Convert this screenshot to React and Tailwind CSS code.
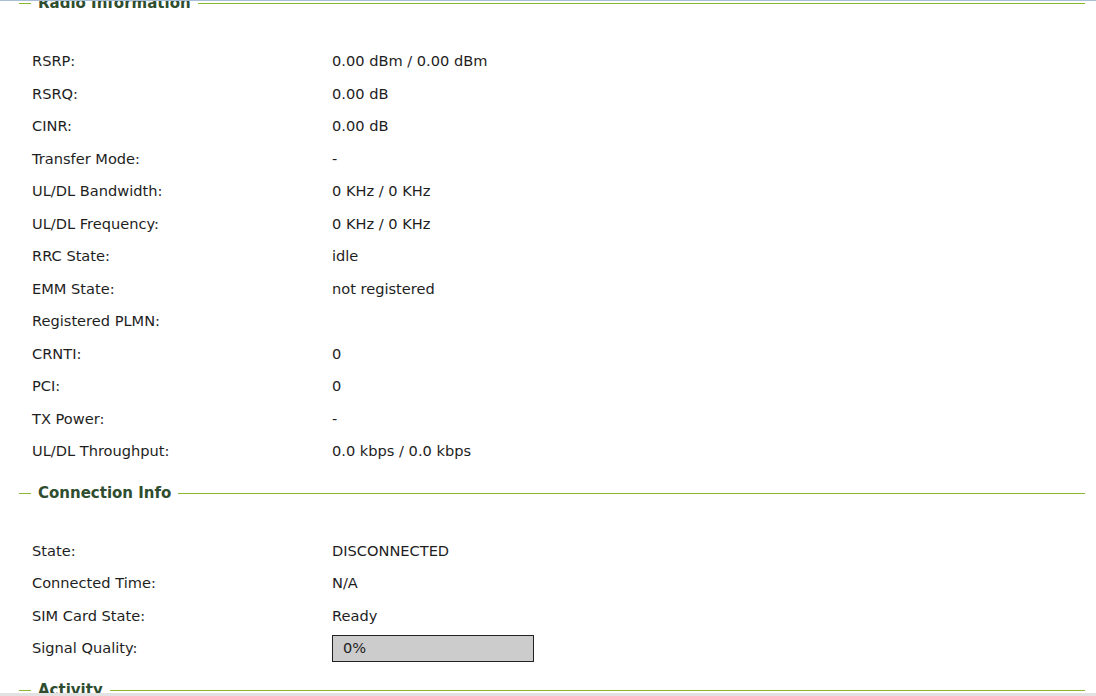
import React from "react";

const radioRows = [
  ["RSRP:", "0.00 dBm / 0.00 dBm"],
  ["RSRQ:", "0.00 dB"],
  ["CINR:", "0.00 dB"],
  ["Transfer Mode:", "-"],
  ["UL/DL Bandwidth:", "0 KHz / 0 KHz"],
  ["UL/DL Frequency:", "0 KHz / 0 KHz"],
  ["RRC State:", "idle"],
  ["EMM State:", "not registered"],
  ["Registered PLMN:", ""],
  ["CRNTI:", "0"],
  ["PCI:", "0"],
  ["TX Power:", "-"],
  ["UL/DL Throughput:", "0.0 kbps / 0.0 kbps"],
];

const connRows = [
  ["State:", "DISCONNECTED"],
  ["Connected Time:", "N/A"],
  ["SIM Card State:", "Ready"],
];

const Legend = ({ title }) => (
  <div className="flex h-[20px] items-center">
    <div className="h-px w-[12px] bg-[#8ab832]" />
    <span className="px-[7px] text-[15px] font-bold leading-none text-[#2f4d2f]">
      {title}
    </span>
    <div className="h-px flex-1 bg-[#8ab832]" />
  </div>
);

const Row = ({ label, children }) => (
  <div className="flex h-[32.5px] items-center">
    <div className="w-[313px] pl-[13px]">{label}</div>
    <div>{children}</div>
  </div>
);

const App = () => {
  return (
    <div
      className="relative h-[696px] w-[1096px] overflow-hidden bg-white text-[14.6px] text-[#1e1e1e]"
      style={{ fontFamily: '"DejaVu Sans", Verdana, sans-serif' }}
    >
      <div className="absolute left-0 right-0 top-0 z-10 h-px bg-[#a9bfd6]" />
      <div className="mr-[11px] ml-[19px] mt-[-7px]">
        <Legend title="Radio Information" />
        <div className="mt-[32px] mb-[16px]">
          {radioRows.map(([l, v]) => (
            <Row key={l} label={l}>
              {v}
            </Row>
          ))}
        </div>

        <Legend title="Connection Info" />
        <div className="mt-[31px] mb-[16px]">
          {connRows.map(([l, v]) => (
            <Row key={l} label={l}>
              {v}
            </Row>
          ))}
          <Row label="Signal Quality:">
            <div className="flex h-[27px] w-[202px] items-center border border-[#222] bg-[#cccccc] pl-[10px]">
              0%
            </div>
          </Row>
        </div>

        <Legend title="Activity" />
      </div>
      <div className="absolute bottom-0 left-0 right-0 h-[3px] bg-[#e2e2e2]" />
    </div>
  );
};

export default App;
